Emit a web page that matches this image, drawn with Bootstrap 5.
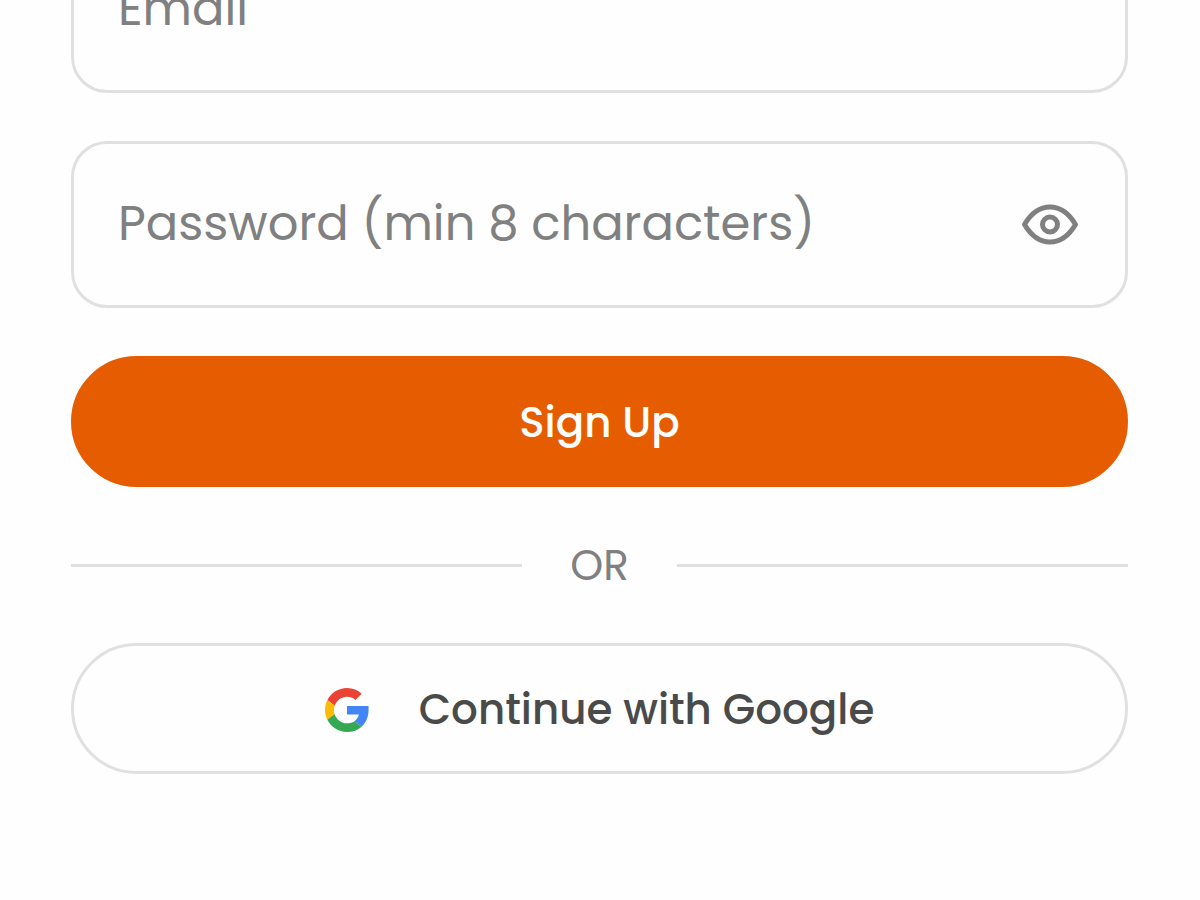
<!DOCTYPE html>
<html lang="en">
<head>
<meta charset="utf-8">
<meta name="viewport" content="width=device-width, initial-scale=1">
<title>Sign Up</title>
<link href="https://cdn.jsdelivr.net/npm/bootstrap@5.3.0/dist/css/bootstrap.min.css" rel="stylesheet">
<style>
  :root { --line: #e0e0e0; --muted: #808080; --brand: #e65c00; }
  body { font-family: Poppins, Inter, "Open Sans", sans-serif; background: #fefefe; overflow-x: hidden; }
  /* The form is scrolled so that the first field is partly above the fold */
  .signup-form { padding: 0 72px 72px 71px; margin-top: -74px; gap: 48px; }
  .field-box { height: 167px; border: 3px solid var(--line); border-radius: 36px; padding: 0 46px 0 44px; }
  .field-box:focus-within { border-color: var(--brand); }
  .field-box .form-control { font-size: 48px; line-height: 80px; height: 80px; color: #4a4a4a; margin-bottom: 2px; min-width: 0; }
  .field-box .form-control::placeholder { color: var(--muted); opacity: 1; }
  .pill-btn { height: 131px; font-size: 42px; line-height: 56px; font-weight: 500; border-width: 3px; padding: 2px 0 0; }
  .pill-btn.brand, .pill-btn.brand:hover { background: var(--brand); border-color: var(--brand); color: #fff; }
  .pill-btn.outline, .pill-btn.outline:hover { background: #fefefe; border-color: var(--line); color: #4a4a4a; gap: 50px; }
  .or-row { gap: 48px; height: 60px; color: var(--muted); font-size: 42px; line-height: 56px; }
  .or-text { padding-top: 2px; }
  .or-line { height: 3px; background: var(--line); }
</style>
</head>
<body>
<form class="signup-form d-flex flex-column">
  <div class="field-box d-flex align-items-center">
    <label class="visually-hidden" for="email">Email</label>
    <input class="form-control border-0 p-0 bg-transparent shadow-none" type="email" id="email" placeholder="Email">
  </div>
  <div class="field-box d-flex align-items-center">
    <label class="visually-hidden" for="password">Password</label>
    <input class="form-control border-0 p-0 bg-transparent shadow-none flex-fill" type="password" id="password" placeholder="Password (min 8 characters)">
    <button type="button" class="btn border-0 p-0 d-flex flex-shrink-0" aria-label="Show password">
      <svg width="58" height="42" viewBox="0 0 58 42" fill="none" stroke="#808080" stroke-width="5" stroke-linejoin="round" aria-hidden="true">
        <path d="M3.500 20.500C10 9.500 18.500 3 29 3S48 9.500 54.500 20.500C48 31.500 39.500 38 29 38S10 31.500 3.500 20.500Z"/>
        <circle cx="29" cy="20.500" r="7.500"/>
      </svg>
    </button>
  </div>
  <button type="submit" class="btn pill-btn brand rounded-pill w-100">Sign Up</button>
  <div class="or-row d-flex align-items-center">
    <span class="or-line flex-fill"></span>
    <span class="or-text">OR</span>
    <span class="or-line flex-fill"></span>
  </div>
  <button type="button" class="btn pill-btn outline rounded-pill w-100 d-flex align-items-center justify-content-center">
    <svg width="44" height="44" viewBox="0 0 48 48" aria-hidden="true">
      <path fill="#EA4335" d="M24 9.500c3.540 0 6.710 1.220 9.210 3.600l6.850-6.850C35.900 2.380 30.470 0 24 0 14.620 0 6.510 5.380 2.560 13.220l7.980 6.190C12.430 13.720 17.740 9.500 24 9.500z"/>
      <path fill="#4285F4" d="M47.500 19.600H24v9.420h12.940c-.58 2.960-2.260 5.480-4.780 7.180l7.730 6c4.510-4.180 7.610-10.360 7.610-17.650z"/>
      <path fill="#FBBC05" d="M10.530 28.590c-.48-1.450-.76-2.990-.76-4.590s.27-3.140.76-4.590l-7.980-6.190C.92 16.460 0 20.120 0 24s.92 7.540 2.560 10.780l7.970-6.190z"/>
      <path fill="#34A853" d="M24 48c6.480 0 11.930-2.130 15.890-5.810l-7.730-6c-2.150 1.450-4.920 2.300-8.160 2.300-6.260 0-11.570-4.220-13.470-9.910l-7.980 6.190C6.510 42.620 14.620 48 24 48z"/>
    </svg>
    <span>Continue with Google</span>
  </button>
</form>
<script src="https://cdn.jsdelivr.net/npm/bootstrap@5.3.0/dist/js/bootstrap.bundle.min.js"></script>
</body>
</html>
